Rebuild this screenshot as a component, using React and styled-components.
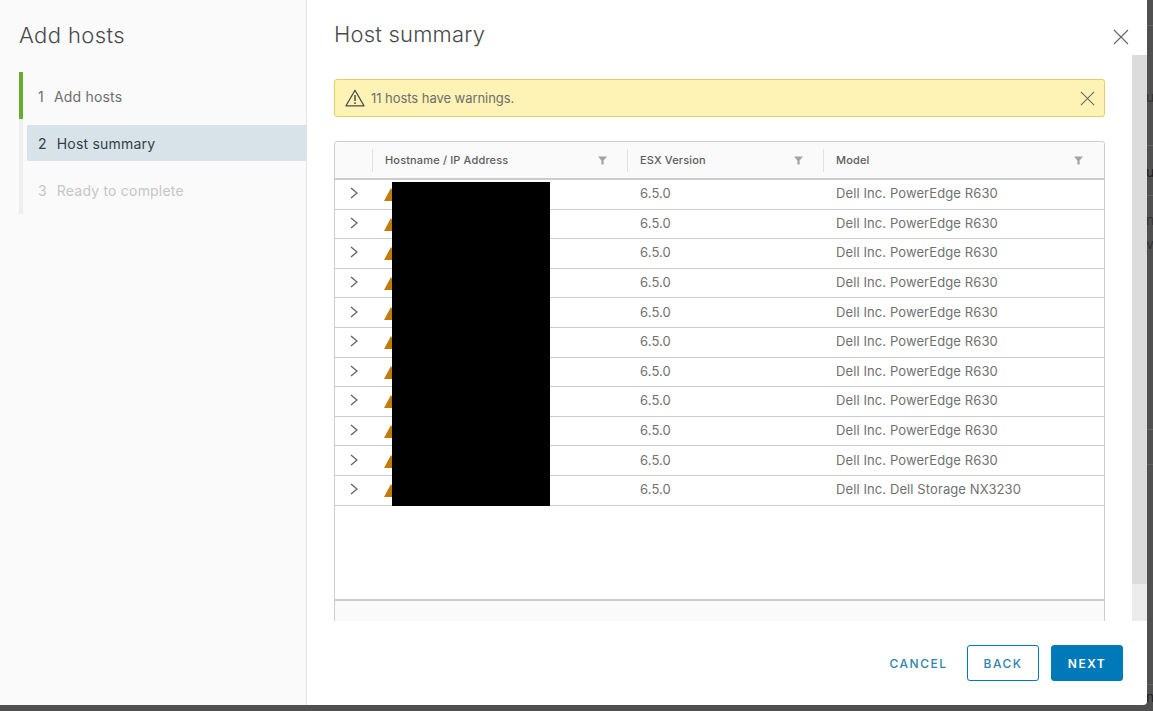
import React from 'react';
import styled, { createGlobalStyle } from 'styled-components';

const GlobalStyle = createGlobalStyle`
  html, body {
    margin: 0;
    padding: 0;
    width: 100%;
    height: 100%;
    overflow: hidden;
    background: #505050;
    font-family: Inter, "Liberation Sans", sans-serif;
  }
  * {
    box-sizing: border-box;
  }
`;

const Backdrop = styled.div`
  position: relative;
  width: 1153px;
  height: 711px;
  background: #505050;
  overflow: hidden;
`;

const BehindLine = styled.div`
  position: absolute;
  left: 1147px;
  top: ${props => props.$top}px;
  width: 6px;
  height: 1px;
  background: #626262;
`;

const BehindText = styled.span`
  position: absolute;
  left: ${props => props.$left}px;
  top: ${props => props.$top}px;
  font-size: 14px;
  line-height: 16px;
  color: ${props => props.$dark ? '#1f1f1f' : '#333333'};
`;

const Modal = styled.div`
  position: absolute;
  left: 0;
  top: 0;
  width: 1147px;
  height: 705px;
  display: flex;
  background: #ffffff;
  border-bottom-right-radius: 4px;
  overflow: hidden;
`;

const Sidebar = styled.aside`
  width: 307px;
  flex-shrink: 0;
  background: #fafafa;
  border-right: 1px solid #e4e4e4;
  padding: 22px 0 0 19px;
`;

const SidebarTitle = styled.h1`
  margin: 0 0 23px 0;
  font-size: 22px;
  line-height: 27px;
  font-weight: 300;
  letter-spacing: 0.4px;
  color: #4a4a4a;
`;

const StepList = styled.div`
  display: flex;
  flex-direction: column;
`;

const StepSlot = styled.div`
  height: ${props => props.$height}px;
  padding-top: 6px;
  border-left: 4px solid ${props => props.$done ? '#66ad2e' : '#eeeeee'};
  padding-left: 4px;
`;

const stepColors = { done: '#6e6e6e', active: '#333f48', todo: '#c6c6c6' };

const StepLabel = styled.div`
  height: 36px;
  display: flex;
  align-items: center;
  padding-left: 11px;
  font-size: 14px;
  letter-spacing: 0.2px;
  color: ${props => stepColors[props.$state]};
  background: ${props => props.$state === 'active' ? '#d8e3e9' : 'transparent'};
  border-radius: 2px 0 0 2px;
`;

const StepNumber = styled.span`
  margin-right: ${props => props.$gap}px;
`;

const Main = styled.main`
  flex: 1;
  min-width: 0;
  display: flex;
  flex-direction: column;
`;

const Header = styled.header`
  height: 55px;
  flex-shrink: 0;
  display: flex;
  justify-content: space-between;
  padding: 20px 18px 0 27px;
`;

const Title = styled.h2`
  margin: 0;
  font-size: 22px;
  line-height: 28px;
  font-weight: 300;
  color: #4a4a4a;
  letter-spacing: 0.2px;
`;

const IconButton = styled.button`
  border: none;
  background: none;
  padding: 0;
  display: flex;
  cursor: pointer;
  color: #666666;
`;

const CloseButton = styled(IconButton)`
  margin-top: 9px;
  height: 16px;
`;

const Body = styled.div`
  flex: 1;
  min-height: 0;
  display: flex;
  overflow: hidden;
`;

const Content = styled.div`
  width: 798px;
  flex-shrink: 0;
  padding: 24px 0 0 27px;
`;

const Alert = styled.div`
  height: 38px;
  display: flex;
  align-items: center;
  padding: 0 9px 0 10px;
  background: #fef3b5;
  border: 1px solid #e4cf63;
  border-radius: 3px;
  font-size: 13px;
  color: #6e6e6e;
`;

const AlertText = styled.span`
  flex: 1;
  margin-left: 6px;
  letter-spacing: -0.05px;
`;

const Table = styled.div`
  position: relative;
  margin-top: 24px;
  border: 1px solid #cccccc;
  border-radius: 3px 3px 0 0;
`;

const TableHead = styled.div`
  height: 38px;
  display: grid;
  grid-template-columns: 37px 255px 196px 1fr;
  align-items: center;
  background: #fafafa;
  border-bottom: 2px solid #cccccc;
  border-radius: 3px 3px 0 0;
`;

const HeadCell = styled.div`
  height: 23px;
  display: flex;
  align-items: center;
  justify-content: space-between;
  padding: 0 ${props => props.$pad}px 0 12px;
  border-left: ${props => props.$first ? 'none' : '1px solid #e2e2e2'};
  font-size: 11px;
  font-weight: 500;
  letter-spacing: 0.15px;
  color: #5c5c5c;
`;

const TableBody = styled.div`
  height: 421px;
  border-bottom: 2px solid #cccccc;
`;

const Row = styled.div`
  height: 29.6px;
  display: grid;
  grid-template-columns: 37px 255px 196px 1fr;
  align-items: center;
  padding-bottom: 2px;
  border-bottom: 1px solid #cccccc;
  font-size: 13px;
  color: #707070;
  letter-spacing: 0.1px;
`;

const ExpandCell = styled.div`
  display: flex;
  justify-content: center;
  padding-left: 1px;
`;

const HostCell = styled.div`
  display: flex;
  align-items: center;
  padding: 3px 0 0 12px;
`;

const Cell = styled.div`
  padding-left: 13px;
`;

const Redaction = styled.div`
  position: absolute;
  left: 57px;
  top: 40px;
  width: 158px;
  height: 324px;
  background: #000000;
`;

const TableFooter = styled.div`
  height: 40px;
  background: #fafafa;
`;

const Scrollbar = styled.div`
  width: 15px;
  margin-left: 27px;
  flex-shrink: 0;
  background: #ececec;
`;

const ScrollThumb = styled.div`
  height: 529px;
  background: #dcdcdc;
`;

const Footer = styled.footer`
  height: 84px;
  flex-shrink: 0;
  display: flex;
  justify-content: flex-end;
  align-items: flex-start;
  gap: 12px;
  padding: 24px 24px 0 0;
`;

const Button = styled.button`
  height: 36px;
  width: ${props => props.$variant === 'flat' ? '73px' : '72px'};
  padding: 0;
  font-family: inherit;
  font-size: 12px;
  font-weight: ${props => props.$variant === 'primary' ? 600 : 500};
  letter-spacing: 1.5px;
  border-radius: 3px;
  cursor: pointer;
  color: ${props => props.$variant === 'primary' ? '#ffffff' : '#2f84ae'};
  background: ${props => props.$variant === 'primary' ? '#0079b8' : 'transparent'};
  border: 1px solid ${props => props.$variant === 'flat' ? 'transparent' : '#0079b8'};
`;

const CloseIcon = ({ size = 16 }) => (
  <svg width={size} height={size} viewBox="0 0 16 16" fill="none" stroke="currentColor" strokeWidth="1.1">
    <path d="M1 1 L15 15 M15 1 L1 15" />
  </svg>
);

const WarningOutline = () => (
  <svg width="20" height="18" viewBox="0 0 20 18" fill="none" stroke="#4a4a4a" strokeWidth="1.3" strokeLinejoin="round">
    <path d="M10 1.2 L19 16.8 H1 Z" />
    <path d="M10 6 V12" strokeWidth="1.5" />
    <path d="M10 13.3 V15" strokeWidth="1.5" />
  </svg>
);

const WarningFilled = () => (
  <svg width="14" height="13" viewBox="0 0 14 13">
    <path d="M7 0 L14 13 H0 Z" fill="#c27b0a" />
  </svg>
);

const Chevron = () => (
  <svg width="8" height="12" viewBox="0 0 8 12" fill="none" stroke="#666666" strokeWidth="1.4">
    <path d="M1 1 L7 6 L1 11" />
  </svg>
);

const FilterIcon = () => (
  <svg width="9" height="9" viewBox="0 0 9 9">
    <path d="M0 0.5 H9 L5.6 4.4 V8.5 H3.4 V4.4 Z" fill="#a3a3a3" />
  </svg>
);

const models = [
  ...Array(10).fill('Dell Inc. PowerEdge R630'),
  'Dell Inc. Dell Storage NX3230',
];

const behindLines = [25, 145, 195, 429, 464, 684];

const App = () => (
  <>
    <GlobalStyle />
    <Backdrop>
      {behindLines.map(top => <BehindLine key={top} $top={top} />)}
      <BehindText $left={1146} $top={89}>us</BehindText>
      <BehindText $left={1146} $top={164} $dark>u</BehindText>
      <BehindText $left={1146} $top={212}>n</BehindText>
      <BehindText $left={1146} $top={236}>v</BehindText>
      <BehindText $left={1146} $top={689} $dark>n</BehindText>
      <Modal>
        <Sidebar>
          <SidebarTitle>Add hosts</SidebarTitle>
          <StepList>
            <StepSlot $done $height={47}>
              <StepLabel $state="done"><StepNumber $gap={10}>1</StepNumber>Add hosts</StepLabel>
            </StepSlot>
            <StepSlot $height={47}>
              <StepLabel $state="active"><StepNumber $gap={10}>2</StepNumber>Host summary</StepLabel>
            </StepSlot>
            <StepSlot $height={48}>
              <StepLabel $state="todo"><StepNumber $gap={10}>3</StepNumber>Ready to complete</StepLabel>
            </StepSlot>
          </StepList>
        </Sidebar>
        <Main>
          <Header>
            <Title>Host summary</Title>
            <CloseButton><CloseIcon /></CloseButton>
          </Header>
          <Body>
            <Content>
              <Alert>
                <WarningOutline />
                <AlertText>11 hosts have warnings.</AlertText>
                <IconButton><CloseIcon size={15} /></IconButton>
              </Alert>
              <Table>
                <TableHead>
                  <HeadCell $first />
                  <HeadCell $pad={20}>Hostname / IP Address <FilterIcon /></HeadCell>
                  <HeadCell $pad={20}>ESX Version <FilterIcon /></HeadCell>
                  <HeadCell $pad={21}>Model <FilterIcon /></HeadCell>
                </TableHead>
                <TableBody>
                  {models.map((model, i) => (
                    <Row key={i}>
                      <ExpandCell><Chevron /></ExpandCell>
                      <HostCell><WarningFilled /></HostCell>
                      <Cell>6.5.0</Cell>
                      <Cell>{model}</Cell>
                    </Row>
                  ))}
                </TableBody>
                <TableFooter />
                <Redaction />
              </Table>
            </Content>
            <Scrollbar><ScrollThumb /></Scrollbar>
          </Body>
          <Footer>
            <Button $variant="flat">CANCEL</Button>
            <Button $variant="outline">BACK</Button>
            <Button $variant="primary">NEXT</Button>
          </Footer>
        </Main>
      </Modal>
    </Backdrop>
  </>
);

export default App;
